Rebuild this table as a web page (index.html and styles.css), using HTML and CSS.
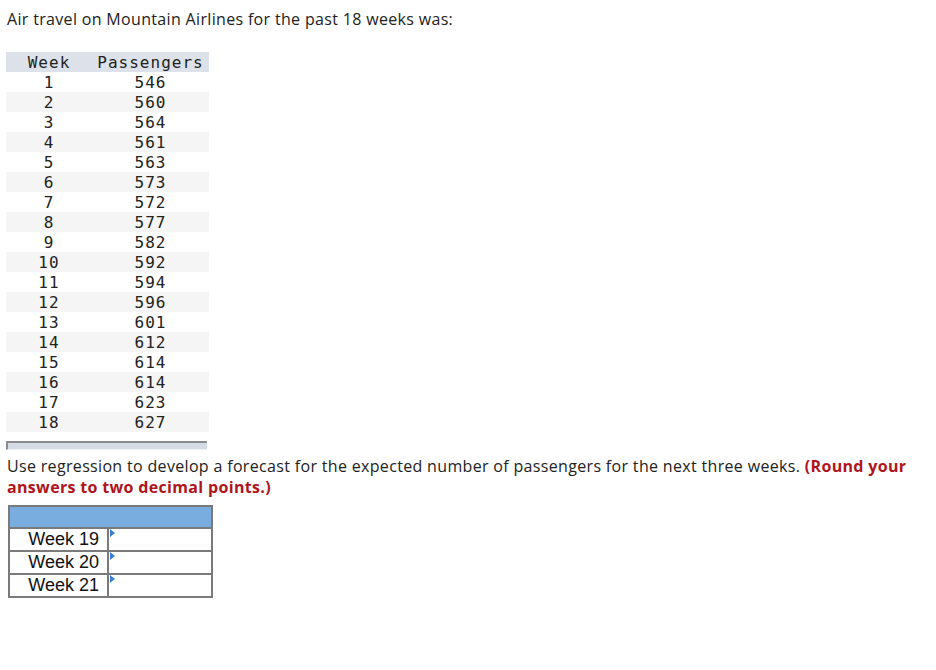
FILE: index.html
```html
<!DOCTYPE html>
<html>
<head>
<meta charset="utf-8">
<link rel="stylesheet" href="styles.css">
</head>
<body>
<p class="intro">Air travel on Mountain Airlines for the past 18 weeks was:</p>
<div class="data-wrap">
<table class="data">
<thead><tr><th class="c1">Week</th><th class="c2">Passengers</th></tr></thead>
<tbody>
<tr><td>1</td><td>546</td></tr>
<tr><td>2</td><td>560</td></tr>
<tr><td>3</td><td>564</td></tr>
<tr><td>4</td><td>561</td></tr>
<tr><td>5</td><td>563</td></tr>
<tr><td>6</td><td>573</td></tr>
<tr><td>7</td><td>572</td></tr>
<tr><td>8</td><td>577</td></tr>
<tr><td>9</td><td>582</td></tr>
<tr><td>10</td><td>592</td></tr>
<tr><td>11</td><td>594</td></tr>
<tr><td>12</td><td>596</td></tr>
<tr><td>13</td><td>601</td></tr>
<tr><td>14</td><td>612</td></tr>
<tr><td>15</td><td>614</td></tr>
<tr><td>16</td><td>614</td></tr>
<tr><td>17</td><td>623</td></tr>
<tr><td>18</td><td>627</td></tr>
</tbody>
</table>
<div class="scrollbar"></div>
</div>
<p class="question">Use regression to develop a forecast for the expected number of passengers for the next three weeks. <strong class="note">(Round your answers to two decimal points.)</strong></p>
<table class="answer">
<tr class="head"><td colspan="2"></td></tr>
<tr><td class="label">Week 19</td><td class="input"><span class="flag"></span></td></tr>
<tr><td class="label">Week 20</td><td class="input"><span class="flag"></span></td></tr>
<tr><td class="label">Week 21</td><td class="input"><span class="flag"></span></td></tr>
</table>
</body>
</html>
```
FILE: styles.css
```css
html, body {
  margin: 0;
  padding: 0;
  background: #fff;
}
body {
  padding: 0 0 0 7px;
  font-family: "Open Sans", "Liberation Sans", sans-serif;
  color: #222;
  font-size: 16px;
}
.intro {
  margin: 0;
  padding-top: 9px;
  line-height: 21px;
  letter-spacing: 0.33px;
}
.data-wrap {
  margin: 22px 0 0 -1px;
  width: 203px;
}
.data {
  border-collapse: collapse;
  width: 203px;
  font-family: "DejaVu Sans Mono", "Liberation Mono", monospace;
  font-size: 16px;
  letter-spacing: 1px;
  color: #222;
}
.data th, .data td {
  padding: 1px 0 0 0;
  height: 19px;
  line-height: 19px;
  text-align: center;
  font-weight: normal;
}
.data thead tr {
  background: #dde2ea;
}
.data .c1 { width: 86px; }
.data .c2 { width: 117px; }
.data tbody tr:nth-child(even) {
  background: #f5f5f5;
}
.scrollbar {
  margin-top: 9px;
  height: 6px;
  background: #d5dbe5;
  border-top: 2px solid #8a8c90;
  border-left: 2px solid #8a8c90;
  border-bottom: 1px solid #eef2fb;
  box-sizing: content-box;
  width: 199px;
}
.question {
  margin: 6px 0 0 0;
  line-height: 21px;
  letter-spacing: 0.33px;
  width: 915px;
}
.note {
  color: #b0141c;
  font-weight: 700;
}
.answer {
  margin: 7px 0 0 1px;
  border-collapse: collapse;
  border: 2px solid #7a7a7a;
  font-family: "Liberation Sans", Arial, sans-serif;
  font-size: 18px;
  color: #111;
}
.answer td {
  border: 2px solid #7a7a7a;
  padding: 0;
  height: 21px;
  line-height: 21px;
}
.answer .head td {
  background: #79ade0;
  height: 20px;
}
.answer .label {
  width: 89px;
  text-align: right;
  padding-right: 8px;
}
.answer .input {
  width: 102px;
  position: relative;
  vertical-align: top;
}
.flag {
  position: absolute;
  left: 1px;
  top: 0;
  width: 0;
  height: 0;
  border-top: 4px solid transparent;
  border-bottom: 4px solid transparent;
  border-left: 5px solid #3a7fd0;
}
```
